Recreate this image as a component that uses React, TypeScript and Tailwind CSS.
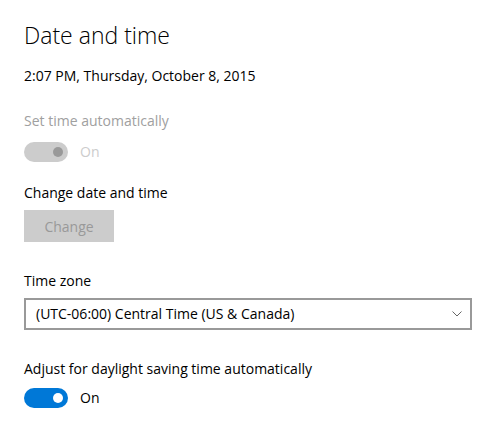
import React from "react";

const font = { fontFamily: '"Open Sans", "Noto Sans", sans-serif' };

function Toggle({ disabled }: { disabled?: boolean }) {
  return (
    <div className="flex items-center h-[20px]">
      <div
        className={
          disabled
            ? "w-[44px] h-[20px] rounded-full bg-[#cccccc] flex items-center justify-end pr-[5px]"
            : "w-[44px] h-[20px] rounded-full bg-[#0078d7] flex items-center justify-end pr-[5px]"
        }
      >
        <div
          className={
            disabled
              ? "w-[10px] h-[10px] rounded-full bg-[#999999]"
              : "w-[10px] h-[10px] rounded-full bg-white"
          }
        />
      </div>
      <span
        className={
          disabled
            ? "ml-[12px] text-[14px] leading-[20px] text-[#cccccc]"
            : "ml-[12px] text-[14px] leading-[20px] text-black"
        }
      >
        On
      </span>
    </div>
  );
}

export default function App() {
  return (
    <div
      className="w-[502px] h-[432px] bg-white flex flex-col items-start pl-[24px] pt-[19px] text-black"
      style={font}
    >
      <div className="text-[23px] leading-[32px] font-light">Date and time</div>
      <div className="mt-[15px] text-[14px] leading-[20px]">
        2:07 PM, Thursday, October 8, 2015
      </div>
      <div className="mt-[25px] text-[14px] leading-[20px] text-[#a0a0a0]">
        Set time automatically
      </div>
      <div className="mt-[11px]">
        <Toggle disabled />
      </div>
      <div className="mt-[21px] text-[14px] leading-[20px]">Change date and time</div>
      <div className="mt-[7px] w-[90px] h-[32px] bg-[#cccccc] flex items-center justify-center text-[14px] text-[#999999]">
        Change
      </div>
      <div className="mt-[29px] text-[14px] leading-[20px]">Time zone</div>
      <div className="mt-[7px] w-[448px] h-[32px] border-2 border-[#999999] flex items-center justify-between pl-[10px] pr-[8px]">
        <span className="text-[14px] leading-[20px]">
          (UTC-06:00) Central Time (US &amp; Canada)
        </span>
        <svg width="10" height="6" viewBox="0 0 10 6">
          <path d="M0.5 0.5 L5 5 L9.5 0.5" fill="none" stroke="#666" strokeWidth="1" />
        </svg>
      </div>
      <div className="mt-[29px] text-[14px] leading-[20px]">
        Adjust for daylight saving time automatically
      </div>
      <div className="mt-[9px]">
        <Toggle />
      </div>
    </div>
  );
}
